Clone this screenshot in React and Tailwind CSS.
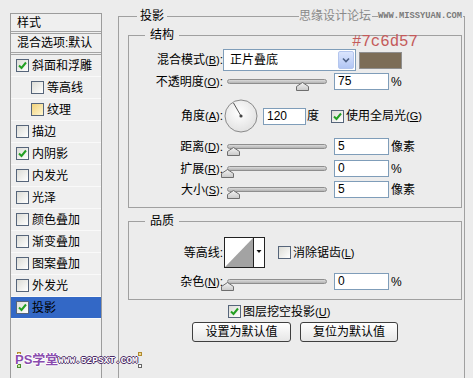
import React from "react";

function Check({ checked, tex }) {
  const fill = tex
    ? "bg-gradient-to-br from-[#f1d27a] to-[#fff6cf]"
    : "bg-gradient-to-br from-[#dcdcd6] to-white";
  return (
    <span className={`w-[13px] h-[13px] shrink-0 border border-[#56657a] ${fill} flex items-center justify-center`}>
      {checked && (
        <svg width="9" height="9" viewBox="0 0 9 9">
          <path d="M1 4.5 L3.5 7 L8 1.5" stroke="#23a023" strokeWidth="2" fill="none" />
        </svg>
      )}
    </span>
  );
}

function Label({ text, k }) {
  return (
    <span className="w-[94px] shrink-0 text-right whitespace-nowrap">
      {text}
      {k && (
        <span className="text-[11px]">
          (<u>{k}</u>)
        </span>
      )}
      :
    </span>
  );
}

function Slider({ pos }) {
  return (
    <div className="relative ml-[4px] w-[100px] h-[17px] shrink-0">
      <div className="absolute left-0 right-0 top-[6px] h-[5px] rounded-full border border-[#8e8e8e] bg-gradient-to-b from-[#dadada] to-[#b4b4b4]" />
      <svg className="absolute top-[9px]" style={{ left: pos - 6 }} width="13" height="10" viewBox="0 0 13 10">
        <defs>
          <linearGradient id="th" x1="0" y1="0" x2="0" y2="1">
            <stop offset="0" stopColor="#f4f4f4" />
            <stop offset="1" stopColor="#c8c8c8" />
          </linearGradient>
        </defs>
        <path d="M0.5 8.5 L0.5 4.5 L6.5 0.5 L12.5 4.5 L12.5 8.5 Z" fill="url(#th)" stroke="#6e6e6e" />
      </svg>
    </div>
  );
}

function Field({ value }) {
  return (
    <div className="ml-[7px] w-[55px] h-[17px] shrink-0 border border-[#7f9db9] bg-white pl-[3px] text-[12px] leading-[15px]">
      {value}
    </div>
  );
}

function SliderRow({ label, k, pos, value, unit, className }) {
  return (
    <div className={`flex items-center h-[17px] ${className}`}>
      <Label text={label} k={k} />
      <Slider pos={pos} />
      <Field value={value} />
      <span className="ml-[2px]">{unit}</span>
    </div>
  );
}

const styles = [
  { name: "斜面和浮雕", on: true },
  { name: "等高线", sub: true },
  { name: "纹理", sub: true, tex: true },
  { name: "描边" },
  { name: "内阴影", on: true },
  { name: "内发光" },
  { name: "光泽" },
  { name: "颜色叠加" },
  { name: "渐变叠加" },
  { name: "图案叠加" },
  { name: "外发光" },
  { name: "投影", on: true, active: true },
];

export default function App() {
  return (
    <div className="relative w-[473px] h-[378px] overflow-hidden bg-[#ececec] flex items-start text-[12px] leading-[16px] text-black font-['Liberation_Sans','Noto_Sans_CJK_SC',sans-serif]">
      {/* style list */}
      <div className="ml-[10px] mt-[13px] w-[92px] h-[380px] shrink-0 border border-[#9c9c9c] bg-[#efefef] flex flex-col">
        <div className="h-[20px] pl-[6px] pt-[1px] border-b-[3px] border-double border-[#a4a4a4]">样式</div>
        <div className="h-[21px] pl-[6px] leading-[18px] border-b-[3px] border-double border-[#a4a4a4]">混合选项:默认</div>
        {styles.map((s) => (
          <div
            key={s.name}
            className={`h-[22px] flex items-center gap-[3px] border-b border-[#f9f9f9] ${s.sub ? "pl-[20px]" : "pl-[5px]"} ${s.active ? "bg-[#3368c6]" : ""}`}
          >
            <Check checked={s.on} tex={s.tex} />
            <span>{s.name}</span>
          </div>
        ))}
      </div>

      {/* drop shadow settings */}
      <fieldset className="ml-[16px] mt-[8px] w-[347px] h-[400px] shrink-0 border border-[#a0a0a0]">
        <legend className="ml-[18px] px-[3px] leading-[16px]">投影</legend>

        <fieldset className="ml-[9px] mt-[3px] w-[334px] pb-[9px] border border-[#a0a0a0]">
          <legend className="ml-[16px] px-[5px] leading-[16px]">结构</legend>

          <div className="flex items-center h-[22px] mt-[6px]">
            <Label text="混合模式" k="B" />
            <div className="w-[133px] h-[22px] shrink-0 border border-[#7f9db9] bg-white flex items-center">
              <span className="flex-1 pl-[6px]">正片叠底</span>
              <span className="w-[16px] h-[18px] mr-[1px] rounded-[2px] border border-[#b4c6ee] bg-gradient-to-b from-[#dbe5fd] to-[#b2c6f4] flex items-center justify-center">
                <svg width="8" height="6" viewBox="0 0 8 6">
                  <path d="M1 1.5 L4 4.5 L7 1.5" stroke="#4d6185" strokeWidth="1.6" fill="none" />
                </svg>
              </span>
            </div>
            <span className="ml-[3px] w-[43px] h-[17px] border border-[#8f8f8f] bg-[#7c6d57]" />
          </div>

          <SliderRow label="不透明度" k="O" pos={75} value="75" unit="%" className="mt-[2px]" />

          <div className="flex items-center h-[34px] mt-[9px]">
            <Label text="角度" k="A" />
            <svg className="ml-[1px] shrink-0" width="34" height="34" viewBox="0 0 34 34">
              <defs>
                <radialGradient id="dial" cx="0.45" cy="0.4" r="0.6">
                  <stop offset="0" stopColor="#ffffff" />
                  <stop offset="1" stopColor="#e2e2e2" />
                </radialGradient>
              </defs>
              <circle cx="17" cy="17" r="16" fill="url(#dial)" stroke="#8a8a8a" />
              <line x1="17" y1="17" x2="9.5" y2="4" stroke="#555" strokeWidth="1" />
              <circle cx="17" cy="17" r="1.6" fill="#444" />
            </svg>
            <div className="ml-[5px] w-[43px] h-[17px] shrink-0 border border-[#7f9db9] bg-white pl-[3px] text-[12px] leading-[15px]">120</div>
            <span className="ml-[1px]">度</span>
            <span className="ml-[12px]">
              <Check checked />
            </span>
            <span className="ml-[2px] whitespace-nowrap">
              使用全局光<span className="text-[11px]">(<u>G</u>)</span>
            </span>
          </div>

          <SliderRow label="距离" k="D" pos={6} value="5" unit="像素" className="mt-[5px]" />
          <SliderRow label="扩展" k="R" pos={0} value="0" unit="%" className="mt-[5px]" />
          <SliderRow label="大小" k="S" pos={6} value="5" unit="像素" className="mt-[4px]" />
        </fieldset>

        <fieldset className="ml-[9px] mt-[5px] w-[334px] pb-[9px] border border-[#a0a0a0]">
          <legend className="ml-[16px] px-[5px] leading-[16px]">品质</legend>

          <div className="flex items-center h-[31px] mt-[8px]">
            <Label text="等高线" />
            <svg className="ml-[1px] shrink-0" width="41" height="31" viewBox="0 0 41 31">
              <rect x="0.5" y="0.5" width="40" height="30" fill="#fff" stroke="#222" />
              <path d="M1 30 L29 1 L29 30 Z" fill="#a3a3a3" />
              <line x1="29.5" y1="1" x2="29.5" y2="30" stroke="#222" />
              <path d="M32.5 13 L37.5 13 L35 16 Z" fill="#111" />
            </svg>
            <span className="ml-[13px]">
              <Check />
            </span>
            <span className="ml-[2px] whitespace-nowrap">
              消除锯齿<span className="text-[11px]">(<u>L</u>)</span>
            </span>
          </div>

          <SliderRow label="杂色" k="N" pos={0} value="0" unit="%" className="mt-[5px]" />
        </fieldset>

        <div className="flex items-center h-[13px] mt-[5px] ml-[109px]">
          <Check checked />
          <span className="ml-[2px] whitespace-nowrap">
            图层挖空投影<span className="text-[11px]">(<u>U</u>)</span>
          </span>
        </div>

        <div className="flex mt-[4px] ml-[73px] gap-[9px]">
          <button className="w-[99px] h-[20px] rounded-[3px] border border-[#3f3f3f] bg-gradient-to-b from-white to-[#e6e6e6] leading-[18px]">设置为默认值</button>
          <button className="w-[98px] h-[20px] rounded-[3px] border border-[#3f3f3f] bg-gradient-to-b from-white to-[#e6e6e6] leading-[18px]">复位为默认值</button>
        </div>
      </fieldset>

      {/* annotation + watermarks */}
      <span className="absolute left-[352px] top-[33px] text-[15.7px] leading-[18px] text-[#c45a5a] font-['Liberation_Mono',monospace]">#7c6d57</span>
      <div className="absolute left-[299px] top-[8px] flex items-center bg-[#ececec] pr-[1px]">
        <span className="text-[#8a8a8a] leading-[16px]">思缘设计论坛</span>
        <span className="ml-[1px] w-[6px] h-px bg-[#a0a0a0]" />
        <span className="text-[8.75px] leading-[16px] text-[#7a7a7a] font-['Liberation_Mono',monospace] font-bold">WWW.MISSYUAN.COM</span>
      </div>
      <div className="absolute left-[5px] top-[349px] h-[22px] w-[140px]">
        <span className="absolute left-[12px] top-[3px] w-[4px] h-[4px] border border-[#b08a30] bg-[#f0d890]" />
        <span className="absolute left-[12px] top-[15px] w-[4px] h-[4px] border border-[#4a8a30] bg-[#c8eab0]" />
        <span className="absolute left-[133px] top-[3px] w-[4px] h-[4px] border border-[#b08a30] bg-[#f0d890]" />
        <span className="absolute left-[133px] top-[15px] w-[4px] h-[4px] border border-[#666] bg-white" />
        <span className="absolute left-[10px] top-[3px] text-[13px] leading-[16px] font-bold text-[#8a4cae] [text-shadow:1px_0_#fff,-1px_0_#fff,0_1px_#fff,0_-1px_#fff]">PS学堂</span>
        <span className="absolute left-[53px] top-[6px] text-[9.5px] leading-[12px] font-bold text-white font-['Liberation_Mono',monospace] [text-shadow:1px_0_#4a2a66,-1px_0_#4a2a66,0_1px_#4a2a66,0_-1px_#4a2a66]">WWW.52PSXT.COM</span>
      </div>
    </div>
  );
}
